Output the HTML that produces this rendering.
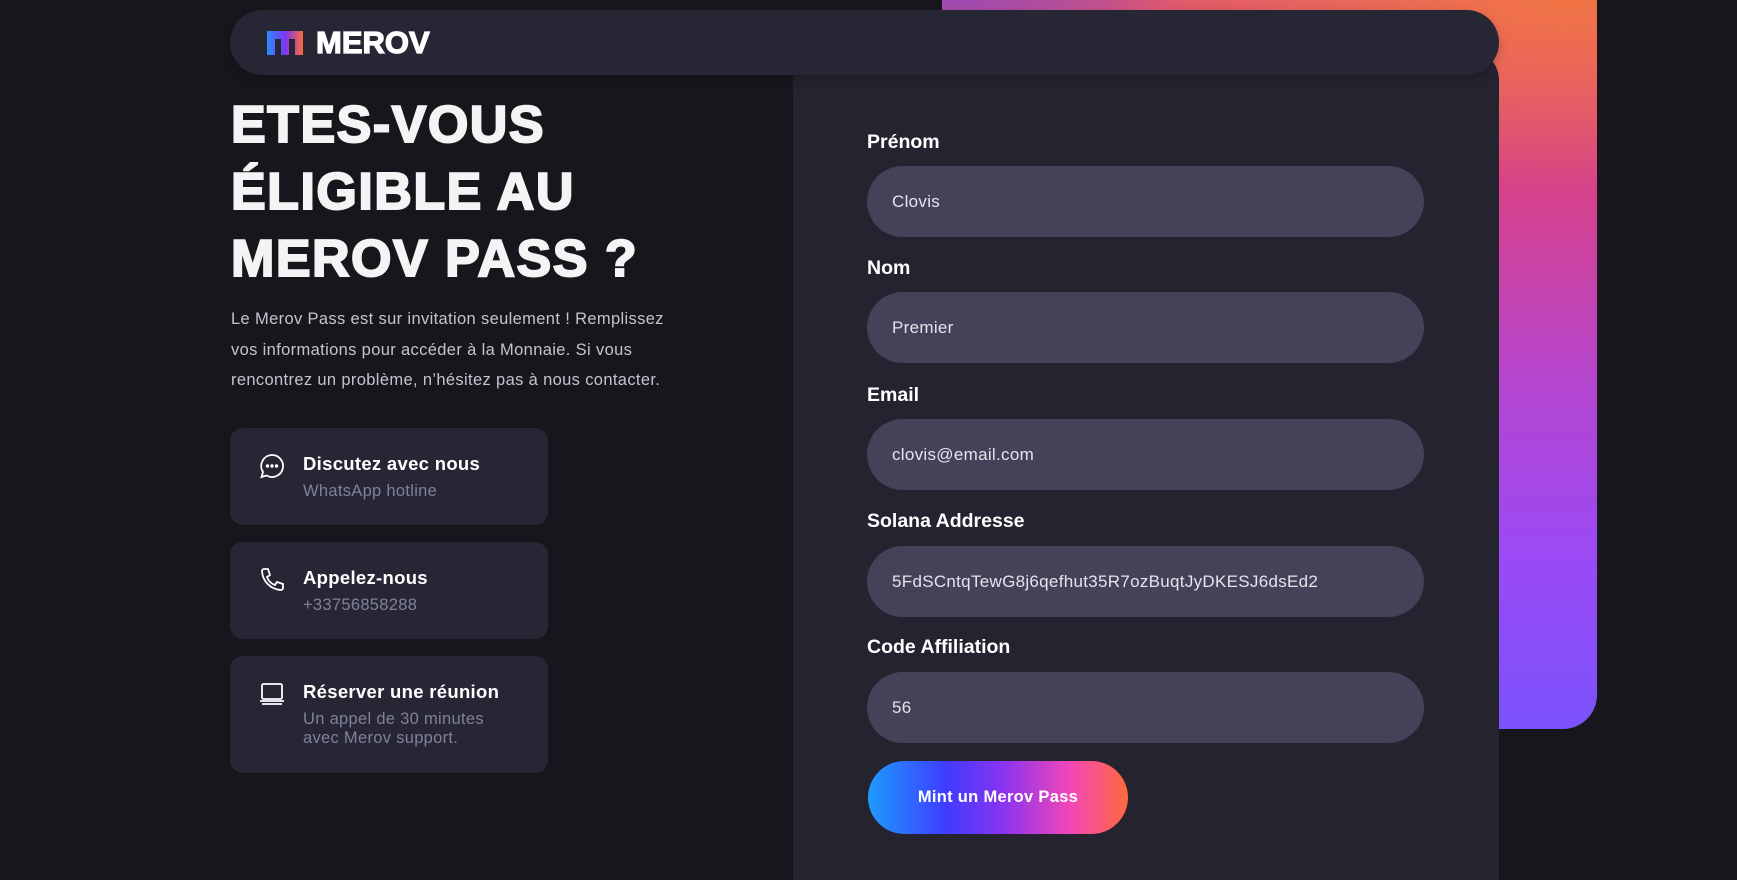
<!DOCTYPE html>
<html><head><meta charset="utf-8"><style>
*{margin:0;padding:0;box-sizing:border-box}
body{width:1737px;height:860px;background:#16161c;position:relative;overflow:hidden;font-family:"Liberation Sans",sans-serif;color:#fff}
.grad{position:absolute;left:942px;top:-40px;width:655px;height:769px;border-radius:0 0 34px 34px;background:radial-gradient(ellipse 70% 25% at 95% 5%,#f27545 0%,rgba(242,117,69,0) 100%),radial-gradient(ellipse 40% 15% at 0% 0%,#7c45d6 0%,rgba(124,69,214,0) 100%),linear-gradient(180deg,#e05a6a 0%,#d6418a 30%,#b445cf 55%,#9a4af5 78%,#7a52fb 100%)}
.form{position:absolute;left:793px;top:50px;width:706px;height:830px;background:#24232f;border-radius:0 30px 0 0}
.header{position:absolute;left:230px;top:10px;width:1269px;height:65px;background:#272634;border-radius:33px;box-shadow:0 4px 10px rgba(0,0,0,.2)}
.logo{position:absolute;left:36px;top:21px;display:flex;align-items:center}
.logo .t{font-weight:900;font-size:31px;letter-spacing:0px;margin-left:12px;line-height:24px;-webkit-text-stroke:1.2px #fff}
h1{position:absolute;left:231px;top:92px;font-size:52px;line-height:67px;font-weight:900;letter-spacing:1.5px;color:#f4f4f4;-webkit-text-stroke:2px #f4f4f4}
p.desc{position:absolute;left:231px;top:304px;white-space:nowrap;font-size:16.5px;line-height:30.5px;color:#c4c4cf;letter-spacing:0.35px}
.card{position:absolute;left:230px;width:318px;background:#272635;border-radius:13px}
.card .ic{position:absolute;left:28px;top:22px}
.card .ti{position:absolute;left:73px;top:25px;font-size:18.5px;font-weight:bold;letter-spacing:0.3px}
.card .su{position:absolute;left:73px;top:54px;font-size:16.5px;color:#80809a;line-height:19px;letter-spacing:0.3px}
.lab{position:absolute;left:867px;font-size:19.5px;font-weight:bold}
.inp{position:absolute;left:867px;width:557px;height:71px;background:#434258;border-radius:36px;font-size:17px;color:#e4e4ec;padding-left:25px;line-height:71px;letter-spacing:0.3px}
.btn{position:absolute;left:868px;top:761px;width:260px;height:73px;border-radius:37px;background:linear-gradient(90deg,#1e9bff 0%,#3f3cff 30%,#8a33f0 52%,#f347b7 78%,#ff6a3c 100%);text-align:center;line-height:73px;font-weight:bold;font-size:16.5px;letter-spacing:0.3px}
</style></head><body>
<div class="grad"></div>
<div class="form"></div>
<div class="header"><div class="logo">
<svg width="38" height="24" viewBox="0 0 36 24"><defs><linearGradient id="g" x1="0" x2="1"><stop offset="0" stop-color="#2a8dff"/><stop offset=".5" stop-color="#7a35f5"/><stop offset="1" stop-color="#ff6a3c"/></linearGradient></defs><path d="M0 0H36V24H28V8H22V24H14V8H8V24H0Z" fill="url(#g)"/></svg>
<span class="t">MEROV</span></div></div>
<h1>ETES-VOUS<br>ÉLIGIBLE AU<br>MEROV PASS ?</h1>
<p class="desc">Le Merov Pass est sur invitation seulement ! Remplissez<br>vos informations pour accéder à la Monnaie. Si vous<br>rencontrez un problème, n’hésitez pas à nous contacter.</p>
<div class="card" style="top:428px;height:97px">
<svg class="ic" width="28" height="28" viewBox="0 0 28 28" style="top:24px" fill="none" stroke="#fff" stroke-width="1.8"><path d="M14 3a11 11 0 1 1-5.5 20.5L3.5 25l1.5-5A11 11 0 0 1 14 3z"/><circle cx="9.5" cy="14" r=".8" fill="#fff"/><circle cx="14" cy="14" r=".8" fill="#fff"/><circle cx="18.5" cy="14" r=".8" fill="#fff"/></svg>
<div class="ti">Discutez avec nous</div><div class="su">WhatsApp hotline</div></div>
<div class="card" style="top:542px;height:97px">
<svg class="ic" width="28" height="28" viewBox="0 0 28 28" style="top:24px" fill="none" stroke="#fff" stroke-width="1.8"><path d="M6 3l4 0 2 6-3 2a13 13 0 0 0 8 8l2-3 6 2v4a2 2 0 0 1-2 2A20 20 0 0 1 4 5a2 2 0 0 1 2-2z"/></svg>
<div class="ti">Appelez-nous</div><div class="su">+33756858288</div></div>
<div class="card" style="top:656px;height:117px">
<svg class="ic" width="28" height="28" viewBox="0 0 28 28" style="top:24px" fill="none" stroke="#fff" stroke-width="1.8"><rect x="4" y="4" width="20" height="15" rx="1.5"/><path d="M2 21h24M4 24h20"/></svg>
<div class="ti">Réserver une réunion</div><div class="su">Un appel de 30 minutes<br>avec Merov support.</div></div>

<div class="lab" style="top:131px">Prénom</div><div class="inp" style="top:166px">Clovis</div>
<div class="lab" style="top:257px">Nom</div><div class="inp" style="top:292px">Premier</div>
<div class="lab" style="top:384px">Email</div><div class="inp" style="top:419px">clovis@email.com</div>
<div class="lab" style="top:510px">Solana Addresse</div><div class="inp" style="top:546px">5FdSCntqTewG8j6qefhut35R7ozBuqtJyDKESJ6dsEd2</div>
<div class="lab" style="top:636px">Code Affiliation</div><div class="inp" style="top:672px">56</div>
<div class="btn">Mint un Merov Pass</div>
</body></html>
